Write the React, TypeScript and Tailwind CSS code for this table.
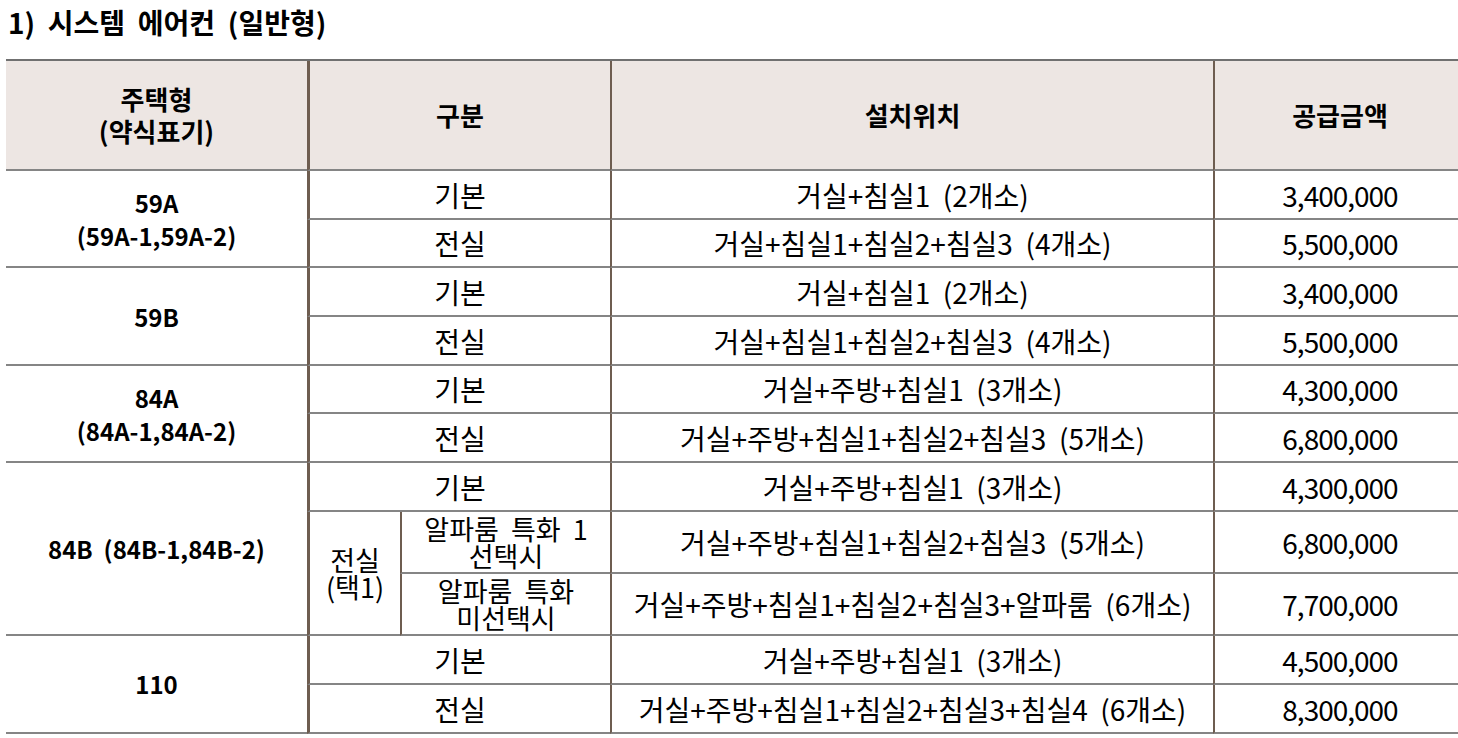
import React from "react"

type Row = { kind: string; loc: string; price: string }

const font = "font-['Noto_Sans_CJK_KR','Noto_Sans',sans-serif]"

function Cell({ className = "", children }: { className?: string; children?: React.ReactNode }) {
  return (
    <div className={`flex items-center justify-center border-b-2 border-[#858585] text-center ${className}`}>
      {children}
    </div>
  )
}

const groups: { name: string[]; rows: Row[] }[] = [
  {
    name: ["59A", "(59A-1,59A-2)"],
    rows: [
      { kind: "기본", loc: "거실+침실1  (2개소)", price: "3,400,000" },
      { kind: "전실", loc: "거실+침실1+침실2+침실3  (4개소)", price: "5,500,000" },
    ],
  },
  {
    name: ["59B"],
    rows: [
      { kind: "기본", loc: "거실+침실1  (2개소)", price: "3,400,000" },
      { kind: "전실", loc: "거실+침실1+침실2+침실3  (4개소)", price: "5,500,000" },
    ],
  },
  {
    name: ["84A", "(84A-1,84A-2)"],
    rows: [
      { kind: "기본", loc: "거실+주방+침실1  (3개소)", price: "4,300,000" },
      { kind: "전실", loc: "거실+주방+침실1+침실2+침실3  (5개소)", price: "6,800,000" },
    ],
  },
]

export default function App() {
  const vline = "border-l-2 border-l-[#6e5d50]"
  const thick = "border-l-[3px] border-l-[#6e5d50]"
  const price = `tracking-[-1px] ${vline}`
  const twoLine = "flex-col text-[27px] leading-[27px]"
  return (
    <div className={`h-[738px] w-[1458px] overflow-hidden bg-white text-black ${font}`}>
      <div className="h-[59px] pl-[8px] pt-[5px] text-[28px] font-bold leading-[34px] whitespace-pre">
        1)  시스템  에어컨  (일반형)
      </div>

      <div className="ml-[6px] grid w-[1459px] grid-cols-[301px_93px_210px_603px_252px] grid-rows-[110px_49px_48px_49px_49px_48px_49px_49px_62px_62px_49px_49px] border-t-2 border-[#707070] text-[28px] leading-[30px]">
        {/* header */}
        <Cell className="flex-col bg-[#ede6e3] text-[26px] font-bold leading-[32px]">
          <span>주택형</span>
          <span>(약식표기)</span>
        </Cell>
        <Cell className={`col-span-2 bg-[#ede6e3] text-[26px] font-bold ${thick}`}>구분</Cell>
        <Cell className={`bg-[#ede6e3] text-[26px] font-bold ${vline}`}>설치위치</Cell>
        <Cell className={`bg-[#ede6e3] text-[26px] font-bold ${vline}`}>공급금액</Cell>

        {groups.map((g) => (
          <React.Fragment key={g.name[0]}>
            <Cell className="row-span-2 flex-col text-[24px] font-bold leading-[33px]">
              {g.name.map((n) => (
                <span key={n}>{n}</span>
              ))}
            </Cell>
            {g.rows.map((r) => (
              <React.Fragment key={r.kind}>
                <Cell className={`col-span-2 ${thick}`}>{r.kind}</Cell>
                <Cell className={`whitespace-pre ${vline}`}>{r.loc}</Cell>
                <Cell className={price}>{r.price}</Cell>
              </React.Fragment>
            ))}
          </React.Fragment>
        ))}

        {/* 84B */}
        <Cell className="row-span-3 text-[24px] font-bold whitespace-pre">84B  (84B-1,84B-2)</Cell>
        <Cell className={`col-span-2 ${thick}`}>기본</Cell>
        <Cell className={`whitespace-pre ${vline}`}>거실+주방+침실1  (3개소)</Cell>
        <Cell className={price}>4,300,000</Cell>

        <Cell className={`row-span-2 ${twoLine} ${thick}`}>
          <span>전실</span>
          <span>(택1)</span>
        </Cell>
        <Cell className={`whitespace-pre ${twoLine} ${vline}`}>
          <span>알파룸  특화  1</span>
          <span>선택시</span>
        </Cell>
        <Cell className={`whitespace-pre ${vline}`}>거실+주방+침실1+침실2+침실3  (5개소)</Cell>
        <Cell className={price}>6,800,000</Cell>

        <Cell className={`whitespace-pre ${twoLine} ${vline}`}>
          <span>알파룸  특화</span>
          <span>미선택시</span>
        </Cell>
        <Cell className={`whitespace-pre ${vline}`}>거실+주방+침실1+침실2+침실3+알파룸  (6개소)</Cell>
        <Cell className={price}>7,700,000</Cell>

        {/* 110 */}
        <Cell className="row-span-2 text-[24px] font-bold">110</Cell>
        <Cell className={`col-span-2 ${thick}`}>기본</Cell>
        <Cell className={`whitespace-pre ${vline}`}>거실+주방+침실1  (3개소)</Cell>
        <Cell className={price}>4,500,000</Cell>
        <Cell className={`col-span-2 ${thick}`}>전실</Cell>
        <Cell className={`whitespace-pre ${vline}`}>거실+주방+침실1+침실2+침실3+침실4  (6개소)</Cell>
        <Cell className={price}>8,300,000</Cell>
      </div>
    </div>
  )
}
